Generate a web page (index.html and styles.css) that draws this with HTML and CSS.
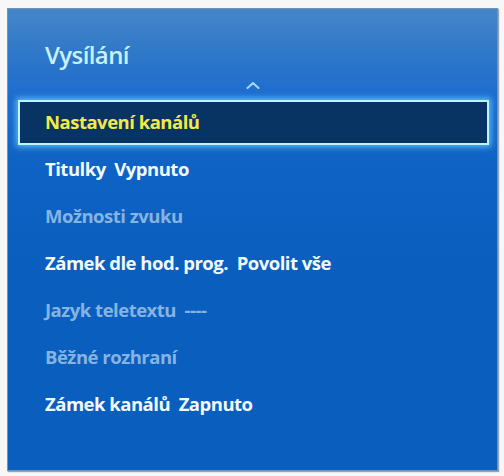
FILE: index.html
```html
<!DOCTYPE html>
<html lang="cs">
<head>
<meta charset="utf-8">
<title>Vysílání</title>
<link rel="stylesheet" href="styles.css">
</head>
<body>
<div class="panel">
  <div class="header">
    <div class="title">Vysílání</div>
    <div class="chevron">
      <svg width="14" height="8" viewBox="0 0 14 8"><path d="M1.5 7 L7 2 L12.5 7" fill="none" stroke="#a9d6f5" stroke-width="2" stroke-linecap="round" stroke-linejoin="round"/></svg>
    </div>
  </div>
  <div class="item selected">Nastavení kanálů</div>
  <div class="list">
    <div class="item">Titulky&nbsp; Vypnuto</div>
    <div class="item dim">Možnosti zvuku</div>
    <div class="item">Zámek dle hod. prog.&nbsp; Povolit vše</div>
    <div class="item dim">Jazyk teletextu&nbsp; ----</div>
    <div class="item dim">Běžné rozhraní</div>
    <div class="item">Zámek kanálů&nbsp; Zapnuto</div>
  </div>
</div>
</body>
</html>
```

FILE: styles.css
```css
html, body {
  margin: 0;
  padding: 0;
  background: #f7f7f7;
}
body {
  padding: 8px 6px 5px 7px;
  font-family: "Open Sans", "Noto Sans", sans-serif;
}
.panel {
  box-sizing: border-box;
  width: 491px;
  height: 463px;
  border: 1px solid #6f93ba;
  box-shadow: 1px 1px 1px rgba(40, 60, 90, 0.45);
  background: linear-gradient(to bottom, #4586c8 0px, #2f78c8 45px, #1e6dd0 85px, #0f63c4 150px, #0a5ebe 260px, #0a5ebe 100%);
  display: flex;
  flex-direction: column;
}
.header {
  padding-top: 30px;
  display: flex;
  flex-direction: column;
}
.title {
  padding-left: 37px;
  font-size: 24px;
  line-height: 32px;
  font-weight: 600;
  color: #c9f1ff;
  letter-spacing: -0.6px;
}
.chevron {
  display: flex;
  justify-content: center;
  height: 29px;
  padding-top: 10px;
  box-sizing: border-box;
}
.item {
  font-size: 18.5px;
  font-weight: 700;
  color: #f2f9ff;
  height: 47px;
  line-height: 47px;
  padding-left: 37px;
  letter-spacing: -0.5px;
  white-space: nowrap;
}
.item.dim {
  color: #86b4e2;
}
.item.selected {
  margin: 0 8px 0 10px;
  height: 45px;
  line-height: 39px;
  box-sizing: border-box;
  padding-left: 25px;
  border: 2px solid #bff3ff;
  background: #073463;
  color: #f3ea4a;
  box-shadow: 0 0 6px 2px rgba(110, 215, 255, 0.75);
}
.list {
  display: flex;
  flex-direction: column;
}
```
